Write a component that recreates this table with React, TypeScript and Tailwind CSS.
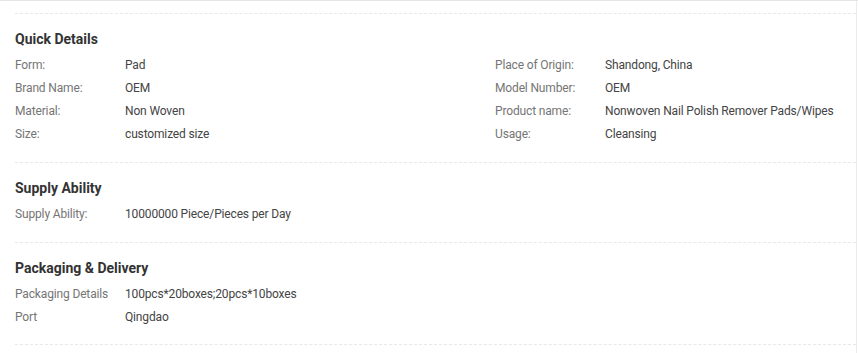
import React from "react";

type Row = [string, string];

const Rows = ({ rows }: { rows: Row[] }) => (
  <>
    {rows.map(([k, v]) => (
      <div key={k} className="flex h-[23px] items-center text-[12px] tracking-[-0.15px]">
        <div className="w-[110px] text-[#757575]">{k}</div>
        <div className="text-[#444]">{v}</div>
      </div>
    ))}
  </>
);

const Section = ({
  title,
  left,
  right,
  pt,
  pb,
}: {
  title: string;
  left: Row[];
  right?: Row[];
  pt: string;
  pb: string;
}) => (
  <div className={`border-t border-dashed border-[#e8e8e8] ${pt} ${pb}`}>
    <h3 className="text-[14px] leading-[20px] font-bold text-[#333]">{title}</h3>
    <div className="flex mt-[4px]">
      <div className="w-[480px]">
        <Rows rows={left} />
      </div>
      {right && (
        <div className="flex-1">
          <Rows rows={right} />
        </div>
      )}
    </div>
  </div>
);

export default function App() {
  return (
    <div
      className="w-[858px] h-[353px] bg-white border-t border-[#e5e5e5] overflow-hidden"
      style={{ fontFamily: "Roboto, 'Liberation Sans', sans-serif" }}
    >
      <div className="w-[857px] h-full border-r border-[#ececec] pl-[15px] pt-[12px]">
        <Section
          title="Quick Details"
          pt="pt-[15px]"
          pb="pb-[17px]"
          left={[
            ["Form:", "Pad"],
            ["Brand Name:", "OEM"],
            ["Material:", "Non Woven"],
            ["Size:", "customized size"],
          ]}
          right={[
            ["Place of Origin:", "Shandong, China"],
            ["Model Number:", "OEM"],
            ["Product name:", "Nonwoven Nail Polish Remover Pads/Wipes"],
            ["Usage:", "Cleansing"],
          ]}
        />
        <Section
          title="Supply Ability"
          pt="pt-[15px]"
          pb="pb-[17px]"
          left={[["Supply Ability:", "10000000 Piece/Pieces per Day"]]}
        />
        <Section
          title="Packaging & Delivery"
          pt="pt-[15px]"
          pb="pb-[16px]"
          left={[
            ["Packaging Details", "100pcs*20boxes;20pcs*10boxes"],
            ["Port", "Qingdao"],
          ]}
        />
        <div className="border-t border-dashed border-[#e8e8e8]" />
      </div>
    </div>
  );
}
